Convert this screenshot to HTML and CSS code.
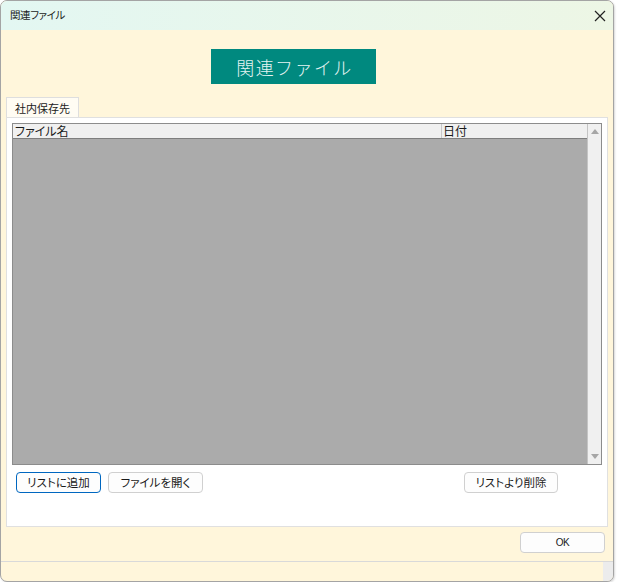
FILE: index.html
```html
<!DOCTYPE html>
<html lang="ja">
<head>
<meta charset="utf-8">
<title>関連ファイル</title>
<link rel="stylesheet" href="styles.css">
</head>
<body>
<div class="window">
  <div class="titlebar">
    <span class="title">関連ファイル</span>
    <span class="close">
      <svg width="12" height="12" viewBox="0 0 12 12"><path d="M1 1L11 11M11 1L1 11" stroke="#222" stroke-width="1.2" fill="none"/></svg>
    </span>
  </div>
  <div class="banner">関連ファイル</div>
  <div class="tabs"><div class="tab">社内保存先</div></div>
  <div class="panel">
    <div class="listview">
      <div class="lv-main">
        <div class="lv-header">
          <div class="col col-name">ファイル名</div>
          <div class="col col-date">日付</div>
        </div>
        <div class="lv-body"></div>
      </div>
      <div class="scrollbar">
        <span class="arrow up"></span>
        <span class="arrow down"></span>
      </div>
    </div>
    <div class="btnrow">
      <button class="btn focused">リストに追加</button>
      <button class="btn wide">ファイルを開く</button>
      <button class="btn del">リストより削除</button>
    </div>
  </div>
  <div class="okrow"><button class="btn ok">OK</button></div>
  <div class="status"><span class="grip"></span></div>
</div>
</body>
</html>
```
FILE: styles.css
```css
* { box-sizing: border-box; }
html, body { margin: 0; padding: 0; background: #ffffff; }
body {
  font-family: "Noto Sans CJK JP", "Noto Sans", sans-serif;
  font-feature-settings: "palt";
  color: #1a1a1a;
}
.window {
  width: 614px;
  height: 582px;
  border: 1px solid #a4a4a4;
  border-radius: 7px;
  overflow: hidden;
  background: #fff6db;
  display: flex;
  flex-direction: column;
  box-shadow: 1px 1px 2px rgba(0,0,0,0.15);
}
.titlebar {
  height: 29px;
  flex: none;
  display: flex;
  align-items: center;
  justify-content: space-between;
  padding: 0 9px 0 9px;
  background: linear-gradient(to right, #e3f7f2, #edf6e5);
}
.title { font-size: 10.5px; letter-spacing: -0.4px; line-height: 1; color: #1a1a1a; }
.close { display: flex; width: 12px; height: 12px; margin-right: -2px; }
.banner {
  flex: none;
  margin: 19px 0 0 210px;
  width: 165px;
  height: 35px;
  background: #00897f;
  color: #e3f3f1;
  font-size: 18px;
  font-weight: 300;
  font-feature-settings: normal;
  letter-spacing: 1.4px;
  display: flex;
  align-items: center;
  justify-content: center;
  padding-left: 2px;
}
.tabs { flex: none; margin: 13px 0 0 5px; display: flex; height: 20px; }
.tab {
  width: 73px;
  height: 20px;
  background: #fffcf3;
  border: 1px solid #dedede;
  border-bottom: none;
  font-size: 11px;
  display: flex;
  align-items: center;
  padding-left: 8px;
  padding-top: 1px;
}
.panel {
  flex: none;
  margin-left: 5px;
  width: 602px;
  height: 410px;
  background: #ffffff;
  border: 1px solid #e0e0e0;
  padding: 5px 0 0 5px;
}
.listview {
  width: 590px;
  height: 342px;
  border: 1px solid #8c8c8c;
  display: flex;
}
.lv-main { flex: 1; display: flex; flex-direction: column; }
.lv-header {
  height: 15px;
  flex: none;
  background: #f0f0f0;
  border-bottom: 1px solid #7e7e7e;
  display: flex;
  font-size: 12px;
  line-height: 14px;
}
.col { padding-left: 2px; white-space: nowrap; }
.col-name { width: 429px; border-right: 1px solid #c8c8c8; }
.col-date { flex: 1; padding-left: 1px; }
.lv-body { flex: 1; background: #ababab; }
.scrollbar {
  width: 14px;
  flex: none;
  background: #f0f0f0;
  border-left: 1px solid #c4c4c4;
  display: flex;
  flex-direction: column;
  justify-content: space-between;
  align-items: center;
  padding: 5px 0 5px 0;
}
.arrow { width: 0; height: 0; border-left: 4px solid transparent; border-right: 4px solid transparent; }
.arrow.up { border-bottom: 5px solid #a6a6a6; }
.arrow.down { border-top: 5px solid #a6a6a6; }
.btnrow { display: flex; margin-top: 7px; padding-left: 4px; gap: 7px; }
.btn {
  height: 21px;
  background: #fdfdfd;
  border: 1px solid #d0d0d0;
  border-radius: 4px;
  font-family: "Noto Sans CJK JP", "Noto Sans", sans-serif;
  font-feature-settings: "palt";
  font-size: 11.5px;
  color: #1a1a1a;
  padding: 0;
  line-height: 1;
  display: flex;
  align-items: center;
  justify-content: center;
}
.btn.focused { width: 85px; border-color: #0067c0; }
.btn.wide { width: 95px; }
.btn.del { width: 94px; margin-left: auto; margin-right: 49px; }
.okrow { flex: none; display: flex; justify-content: flex-end; padding-right: 8px; margin-top: 5px; }
.btn.ok { width: 85px; font-family: "Liberation Sans Narrow", "Liberation Sans", sans-serif; font-size: 10px; letter-spacing: -0.5px; }
.status {
  margin-top: auto;
  height: 20px;
  border-top: 1px solid #d9d9d9;
  display: flex;
  justify-content: flex-end;
}
.grip { width: 10px; background: #ececec; margin-right: 0; }
```
